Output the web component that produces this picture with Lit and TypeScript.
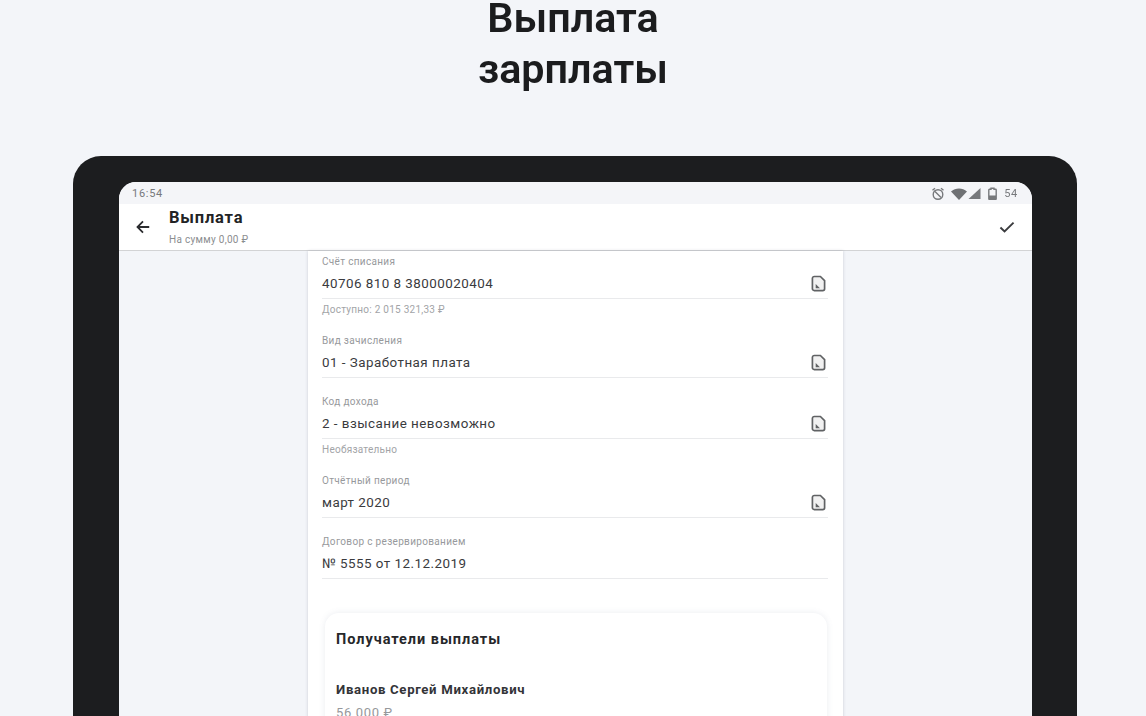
import { LitElement, html, css } from "lit";
import { customElement } from "lit/decorators.js";

const docIcon = html`<svg class="doc" viewBox="0 0 16 18" width="15" height="17" fill="none">
  <path d="M3.5 1.5h6.5l4.5 4.5v8.5a2 2 0 0 1-2 2h-9a2 2 0 0 1-2-2v-11a2 2 0 0 1 2-2z" fill="#f1f1f1" stroke="#606264" stroke-width="1.8"/>
  <path d="M5 9.5l4.5 4.6H5z" fill="#606264"/>
</svg>`;

const fields = [
  { label: "Счёт списания", value: "40706 810 8 38000020404", helper: "Доступно: 2 015 321,33 ₽", icon: true },
  { label: "Вид зачисления", value: "01 - Заработная плата", icon: true },
  { label: "Код дохода", value: "2 - взысание невозможно", helper: "Необязательно", icon: true },
  { label: "Отчётный период", value: "март 2020", icon: true },
  { label: "Договор с резервированием", value: "№ 5555 от 12.12.2019", icon: false },
];

@customElement("app-root")
export class AppRoot extends LitElement {
  static styles = css`
    :host {
      display: block;
      height: 716px;
      overflow: hidden;
      background: #f3f5f9;
      font-family: Roboto, "Liberation Sans", sans-serif;
    }
    .title {
      height: 156px;
      display: flex;
      flex-direction: column;
      gap: 15px;
      align-items: center;
      font-size: 41.3px;
      font-weight: 600;
      color: #1b1c1e;
      filter: blur(0.7px);
    }
    .title div { height: 36px; line-height: 36px; }
    .device {
      margin: 0 69px 0 73px;
      height: 560px;
      box-sizing: border-box;
      padding: 26px 45px 0 46px;
      background: #1c1d1f;
      border-radius: 28px 28px 0 0;
    }
    .screen {
      height: 534px;
      overflow: hidden;
      background: #f3f5f9;
      border-radius: 17px 17px 0 0;
      filter: blur(0.75px);
    }
    .status {
      height: 22px;
      display: flex;
      align-items: center;
      padding: 1px 14px 0 13px;
      box-sizing: border-box;
      font-size: 11px;
      letter-spacing: 0.7px;
      color: #77797c;
      background: #f4f5f8;
    }
    .status .time { flex: 1; }
    .status svg { display: block; }
    .status-icons { display: flex; align-items: center; gap: 6px; }
    .status-icons span { margin-left: 1px; }
    .status-icons .signal { margin-left: -5px; }
    .status-icons .battery { margin-left: 1px; }
    .appbar {
      height: 46px;
      display: flex;
      align-items: center;
      background: #fff;
      border-bottom: 1.5px solid #d2d3d5;
    }
    .back { margin: 0 18px 0 16px; flex: none; }
    .heading { flex: 1; }
    .heading b {
      display: block;
      height: 25px;
      font-size: 16.5px;
      line-height: 20px;
      font-weight: 700;
      letter-spacing: 0.8px;
      color: #222325;
    }
    .heading small {
      display: block;
      font-size: 10px;
      line-height: 14px;
      color: #8b8d90;
      letter-spacing: 0.3px;
    }
    .check { margin-right: 16px; }
    .column {
      margin: 0 189px 0 189px;
      height: 486px;
      box-sizing: border-box;
      padding: 4px 15px 0 14px;
      background: #fff;
      box-shadow: 0 0 3px rgba(60, 70, 90, 0.22);
    }
    .field { padding-bottom: 17px; }
    .label {
      height: 14px;
      font-size: 10px;
      line-height: 14px;
      color: #97999c;
      letter-spacing: 0.33px;
    }
    .value {
      height: 29px;
      display: flex;
      align-items: center;
      justify-content: space-between;
      border-bottom: 1px solid #e9eaec;
      font-size: 13.4px;
      letter-spacing: 0.47px;
      color: #3a3b3e;
    }
    .value span { margin-top: -1px; }
    .doc { margin-right: 2px; }
    .helper {
      margin-top: 4px;
      height: 14px;
      font-size: 10px;
      line-height: 14px;
      color: #a2a4a7;
      letter-spacing: 0.25px;
    }
    .card {
      margin: 17px 1px 0 3px;
      padding: 18px 11px 0;
      height: 200px;
      background: #fff;
      border-radius: 14px;
      box-shadow: 0 0 6px rgba(90, 110, 140, 0.13);
    }
    .card h3 {
      margin: 0;
      height: 18px;
      font-size: 14.5px;
      line-height: 18px;
      font-weight: 700;
      letter-spacing: 0.95px;
      color: #26272a;
    }
    .name {
      margin-top: 32px;
      font-size: 13.2px;
      line-height: 18px;
      font-weight: 700;
      letter-spacing: 0.67px;
      color: #333438;
    }
    .amount {
      margin-top: 5px;
      font-size: 13px;
      line-height: 18px;
      color: #96989b;
      letter-spacing: 0.65px;
    }
  `;

  render() {
    return html`
      <div class="title"><div>Выплата</div><div>зарплаты</div></div>
      <div class="device">
        <div class="screen">
          <div class="status">
            <span class="time">16:54</span>
            <div class="status-icons">
              <svg width="14" height="14" viewBox="0 0 14 14" fill="none" stroke="#77797c" stroke-width="1.4">
                <circle cx="7" cy="7.5" r="4.8"/><path d="M1.5 3.2 4 1.2M12.5 3.2 10 1.2M4 4.5l6 6"/>
              </svg>
              <svg width="16" height="12" viewBox="0 0 16 12" fill="#6f7174"><path d="M0 3.6C4.5-.6 11.5-.6 16 3.6L8 12z"/></svg>
              <svg class="signal" width="13" height="11" viewBox="0 0 12 11" fill="#77797c"><path d="M12 0v11H0z"/></svg>
              <svg class="battery" width="9" height="13" viewBox="0 0 9 13" fill="none" stroke="#77797c" stroke-width="1.4">
                <path d="M3 1.2h3v1h1.6a.6.6 0 0 1 .6.6v9a.6.6 0 0 1-.6.6H1.4a.6.6 0 0 1-.6-.6v-9a.6.6 0 0 1 .6-.6H3z"/><path d="M1 8.5h7V12H1z" fill="#77797c" stroke="none"/>
              </svg>
              <span>54</span>
            </div>
          </div>
          <div class="appbar">
            <svg class="back" width="16" height="16" viewBox="0 0 18 18" fill="none" stroke="#2b2c2f" stroke-width="2">
              <path d="M16 9H3M9 2.8 2.8 9 9 15.2"/>
            </svg>
            <div class="heading">
              <b>Выплата</b>
              <small>На сумму 0,00 ₽</small>
            </div>
            <svg class="check" width="18" height="14" viewBox="0 0 20 16" fill="none" stroke="#3a3b3e" stroke-width="2.2">
              <path d="M2.5 8.5 7.2 13 17.5 3"/>
            </svg>
          </div>
          <div class="column">
            ${fields.map(
              (f) => html`<div class="field">
                <div class="label">${f.label}</div>
                <div class="value"><span>${f.value}</span>${f.icon ? docIcon : ""}</div>
                ${f.helper ? html`<div class="helper">${f.helper}</div>` : ""}
              </div>`
            )}
            <div class="card">
              <h3>Получатели выплаты</h3>
              <div class="name">Иванов Сергей Михайлович</div>
              <div class="amount">56 000 ₽</div>
            </div>
          </div>
        </div>
      </div>
    `;
  }
}
